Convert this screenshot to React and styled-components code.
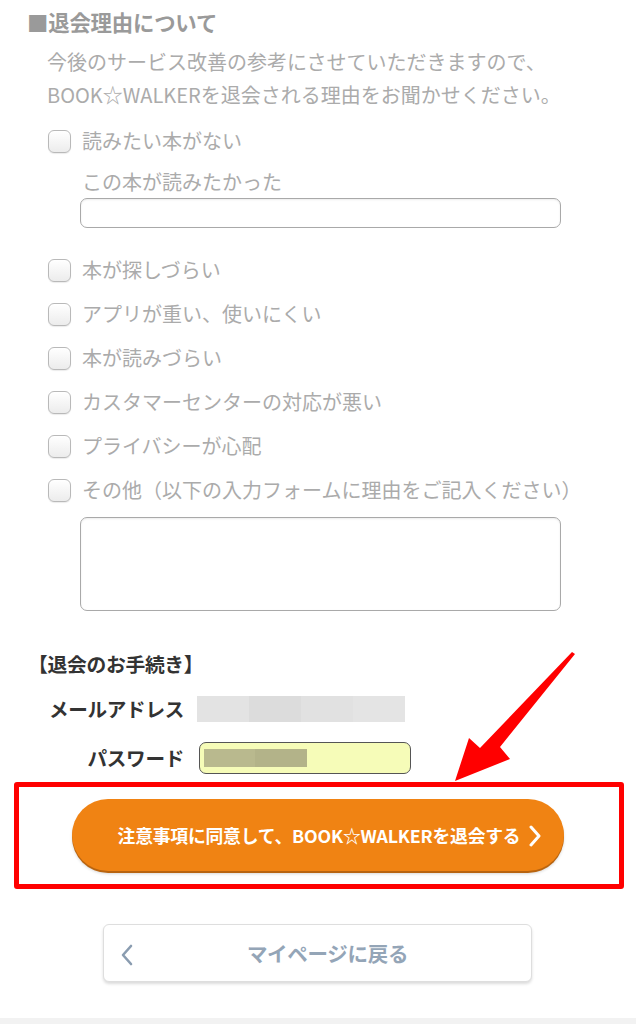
import React from 'react';
import styled, { createGlobalStyle } from 'styled-components';

const GlobalStyle = createGlobalStyle`
  html, body {
    margin: 0;
    padding: 0;
    background: #fff;
  }
  body {
    font-family: 'Noto Sans CJK JP', 'Noto Sans', sans-serif;
  }
`;

const Page = styled.div`
  position: relative;
  width: 636px;
  min-height: 1024px;
  display: flex;
  flex-direction: column;
  background: #fff;
`;

const ReasonSection = styled.section`
  padding: 10px 0 0 27px;
`;

const SectionTitle = styled.h2`
  margin: 0;
  font-size: 21.4px;
  line-height: 24px;
  font-weight: 700;
  color: #9a9a9a;
  letter-spacing: -0.2px;
`;

const Lead = styled.p`
  margin: 11px 0 0 20px;
  font-size: 20px;
  line-height: 33px;
  color: #ababab;
`;

const Options = styled.div`
  margin: 8px 0 0 21px;
  display: flex;
  flex-direction: column;
`;

const OptionRow = styled.label`
  display: flex;
  align-items: center;
  gap: 11px;
  height: 44px;
`;

const Check = styled.span`
  box-sizing: border-box;
  width: 23px;
  height: 23px;
  border: 1.5px solid #b9b9b9;
  border-radius: 6px;
  background: linear-gradient(#ffffff, #ececec);
  box-shadow: inset 0 1px 1px rgba(255, 255, 255, 0.9), 0 1px 1px rgba(0, 0, 0, 0.08);
  flex: none;
`;

const OptionText = styled.span`
  font-size: 20px;
  line-height: 24px;
  color: #ababab;
`;

const SubField = styled.div`
  margin: ${(p) => p.$before}px 0 ${(p) => p.$after || 0}px 32px;
  display: flex;
  flex-direction: column;
  gap: 4px;
`;

const Caption = styled.span`
  padding-left: 2px;
  font-size: 20px;
  line-height: 24px;
  color: #ababab;
`;

const TextBox = styled.div`
  box-sizing: border-box;
  width: 481px;
  height: ${(p) => p.$h}px;
  border: 1.5px solid #a9a9a9;
  border-radius: 7px;
  background: #fff;
  box-shadow: inset 0 1px 2px rgba(0, 0, 0, 0.08);
`;

const ProcedureSection = styled.section`
  margin-top: 40px;
  display: flex;
  flex-direction: column;
`;

const ProcedureTitle = styled.h3`
  margin: 0 0 0 28px;
  font-size: 19.8px;
  line-height: 26px;
  font-weight: 700;
  color: #333;
  letter-spacing: -0.3px;
`;

const FieldGrid = styled.div`
  margin-top: 19px;
  display: grid;
  grid-template-columns: 184px auto;
  column-gap: 14px;
  row-gap: 20px;
  align-items: center;
`;

const FieldLabel = styled.span`
  text-align: right;
  font-size: 19.6px;
  line-height: 26px;
  font-weight: 700;
  color: #333;
  letter-spacing: -0.3px;
`;

const MaskedMail = styled.div`
  width: 208px;
  height: 26px;
  margin-left: -1px;
  background: linear-gradient(90deg, #e3e3e3 0 25%, #dcdcdc 25% 50%, #e1e1e1 50% 75%, #e4e4e4 75%);
  filter: blur(0.6px);
`;

const PasswordBox = styled.div`
  box-sizing: border-box;
  width: 212px;
  height: 32px;
  margin-left: 1px;
  padding: 4px;
  border: 1.5px solid #555;
  border-radius: 7px;
  background: #f6fcb8;
  display: flex;
  align-items: center;
`;

const MaskedPass = styled.div`
  width: 103px;
  height: 18px;
  background: linear-gradient(90deg, #b9b98e 0 50%, #b3b389 50%);
  filter: blur(0.5px);
`;

const Highlight = styled.div`
  box-sizing: border-box;
  margin: 8px 0 0 14px;
  width: 610px;
  height: 107px;
  border: 5px solid #ff0000;
  border-radius: 3px;
  padding: 12px 55px 0 53px;
`;

const WithdrawButton = styled.button`
  position: relative;
  width: 492px;
  height: 72px;
  border: none;
  border-radius: 36px;
  background: #f08313;
  box-shadow: 0 2px 0 #b86410, 0 3px 3px rgba(0, 0, 0, 0.15);
  color: #fff;
  font-family: inherit;
  font-size: 17.8px;
  font-weight: 700;
  letter-spacing: -0.2px;
  display: flex;
  align-items: center;
  justify-content: center;
  padding: 0 0 0 2px;
`;

const ButtonChevron = styled.svg`
  position: absolute;
  right: 22px;
  top: 26px;
`;

const BackButton = styled.button`
  position: relative;
  margin: 35px 0 0 103px;
  width: 429px;
  height: 58px;
  border: 1px solid #dedede;
  border-radius: 6px;
  background: #fff;
  box-shadow: 0 2px 3px rgba(0, 0, 0, 0.14);
  color: #94a5b7;
  font-family: inherit;
  font-size: 20.5px;
  font-weight: 700;
  letter-spacing: -0.3px;
  display: flex;
  align-items: center;
  justify-content: center;
  padding: 0 0 0 20px;
`;

const BackChevron = styled.svg`
  position: absolute;
  left: 16px;
  top: 19px;
`;

const Footer = styled.div`
  margin-top: auto;
  height: 6px;
  background: #f2f2f2;
`;

const Pointer = styled.svg`
  position: absolute;
  left: 440px;
  top: 640px;
  pointer-events: none;
`;

const reasons = [
  '本が探しづらい',
  'アプリが重い、使いにくい',
  '本が読みづらい',
  'カスタマーセンターの対応が悪い',
  'プライバシーが心配',
  'その他（以下の入力フォームに理由をご記入ください）',
];

const Option = ({ children }) => (
  <OptionRow>
    <Check />
    <OptionText>{children}</OptionText>
  </OptionRow>
);

const App = () => {
  return (
    <Page>
      <GlobalStyle />
      <ReasonSection>
        <SectionTitle>■退会理由について</SectionTitle>
        <Lead>
          今後のサービス改善の参考にさせていただきますので、
          <br />
          BOOK☆WALKERを退会される理由をお聞かせください。
        </Lead>
        <Options>
          <Option>読みたい本がない</Option>
          <SubField $before={7} $after={20}>
            <Caption>この本が読みたかった</Caption>
            <TextBox $h={30} />
          </SubField>
          {reasons.map((r) => (
            <Option key={r}>{r}</Option>
          ))}
          <SubField $before={5}>
            <TextBox $h={94} />
          </SubField>
        </Options>
      </ReasonSection>

      <ProcedureSection>
        <ProcedureTitle>【退会のお手続き】</ProcedureTitle>
        <FieldGrid>
          <FieldLabel>メールアドレス</FieldLabel>
          <MaskedMail />
          <FieldLabel>パスワード</FieldLabel>
          <PasswordBox>
            <MaskedPass />
          </PasswordBox>
        </FieldGrid>
      </ProcedureSection>

      <Highlight>
        <WithdrawButton>
          注意事項に同意して、BOOK☆WALKERを退会する
          <ButtonChevron width="14" height="22" viewBox="0 0 14 22">
            <polyline points="3,2 11,11 3,20" fill="none" stroke="#fff" strokeWidth="3" strokeLinecap="round" strokeLinejoin="round" />
          </ButtonChevron>
        </WithdrawButton>
      </Highlight>

      <BackButton>
        <BackChevron width="14" height="22" viewBox="0 0 14 22">
          <polyline points="11,2 3,11 11,20" fill="none" stroke="#8a9cb0" strokeWidth="2.6" strokeLinecap="round" strokeLinejoin="round" />
        </BackChevron>
        マイページに戻る
      </BackButton>

      <Footer />

      <Pointer width="150" height="150" viewBox="0 0 150 150">
        <polygon
          fill="#ff0000"
          points="132,12 135,14 60,107 70,119 15,141 29,98 40,108"
        />
      </Pointer>
    </Page>
  );
};

export default App;
